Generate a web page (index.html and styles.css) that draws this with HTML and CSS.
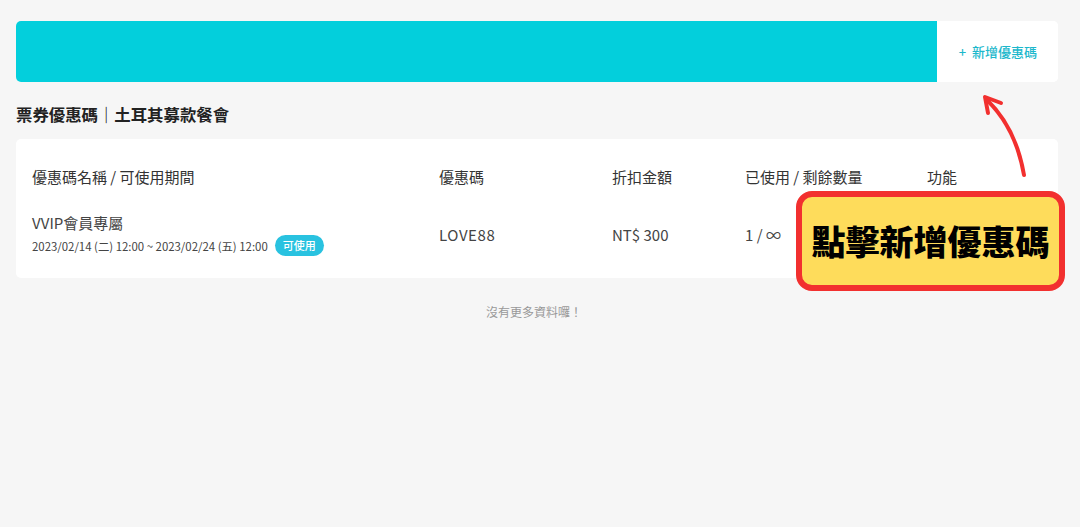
FILE: index.html
```html
<!DOCTYPE html>
<html lang="zh-Hant">
<head>
    <meta charset="UTF-8">
    <title>票券優惠碼</title>
    <link rel="stylesheet" href="styles.css">
</head>
<body>
    <div class="topbar">
        <div class="banner"></div>
        <button class="add-btn">+&nbsp; 新增優惠碼</button>
    </div>

    <h2 class="page-title">票券優惠碼｜土耳其募款餐會</h2>

    <div class="coupon-card">
        <div class="coupon-row head">
            <div>優惠碼名稱 / 可使用期間</div>
            <div>優惠碼</div>
            <div>折扣金額</div>
            <div>已使用 / 剩餘數量</div>
            <div>功能</div>
        </div>
        <div class="coupon-row item">
            <div class="name-cell">
                <div class="coupon-name">VVIP會員專屬</div>
                <div class="coupon-period">2023/02/14 (二) 12:00 ~ 2023/02/24 (五) 12:00 <span class="badge">可使用</span></div>
            </div>
            <div class="code">LOVE88</div>
            <div>NT$ 300</div>
            <div>1 / ∞</div>
            <div></div>
        </div>
    </div>

    <p class="no-more">沒有更多資料囉！</p>

    <!-- annotation overlay -->
    <svg class="hint-arrow" width="1080" height="200" viewBox="0 0 1080 200">
        <path d="M1024 175 Q1016 128 987 100" fill="none" stroke="#f2302f" stroke-width="4" stroke-linecap="round"/>
        <path d="M1001 103 L985 97 L988 113" fill="none" stroke="#f2302f" stroke-width="4" stroke-linecap="round" stroke-linejoin="round"/>
    </svg>
    <div class="hint-box">點擊新增優惠碼</div>
</body>
</html>
```

FILE: styles.css
```css
body {
    margin: 0;
    padding: 21px 22px 0 16px;
    background-color: #f6f6f6;
    font-family: "Noto Sans CJK TC", "Noto Sans", sans-serif;
    color: #333;
    position: relative;
    height: 527px;
    box-sizing: border-box;
    overflow: hidden;
}
.topbar {
    display: flex;
    height: 61px;
    background-color: white;
    border-radius: 5px;
    overflow: hidden;
}
.banner {
    flex: 1;
    background-color: #03cfdc;
}
.add-btn {
    width: 121px;
    border: none;
    background: white;
    color: #1cb8cc;
    font-family: inherit;
    font-size: 13px;
    font-weight: 500;
    padding: 0 0 0 1px;
    cursor: pointer;
}
.page-title {
    margin: 22px 0 13px;
    font-size: 16.4px;
    font-weight: bold;
    color: #222;
    line-height: 22px;
    position: relative;
    top: -1px;
}
.coupon-card {
    background-color: white;
    border-radius: 5px;
    padding: 23px 0 0 16px;
    height: 139px;
    box-sizing: border-box;
}
.coupon-row {
    display: grid;
    grid-template-columns: 407px 173px 133px 182px 1fr;
    font-size: 15px;
}
.coupon-row.head {
    line-height: 30px;
    margin-bottom: 21px;
}
.coupon-row.item {
    align-items: center;
    color: #444;
}
.coupon-row.item > div {
    font-size: 15px;
}
.coupon-name {
    line-height: 20px;
    margin-bottom: 2px;
}
.coupon-period {
    font-size: 11.4px;
    color: #444;
    display: flex;
    align-items: center;
}
.badge {
    display: inline-block;
    margin-left: 7px;
    background-color: #29c2e0;
    color: white;
    font-size: 11px;
    font-weight: 500;
    border-radius: 11px;
    padding: 0 8px;
    line-height: 21px;
}
.code {
    letter-spacing: 0.6px;
}
.no-more {
    text-align: center;
    font-size: 12px;
    color: #999;
    margin: 25px 0 0;
    padding-right: 6px;
}
.hint-arrow {
    position: absolute;
    left: 0;
    top: 0;
}
.hint-box {
    position: absolute;
    left: 796px;
    top: 191px;
    width: 269px;
    height: 100px;
    box-sizing: border-box;
    border: 6px solid #f2302f;
    border-radius: 16px;
    background-color: #fedc5b;
    color: #000;
    font-size: 34px;
    font-weight: 900;
    display: flex;
    align-items: center;
    justify-content: center;
    padding-bottom: 2px;
}
```
